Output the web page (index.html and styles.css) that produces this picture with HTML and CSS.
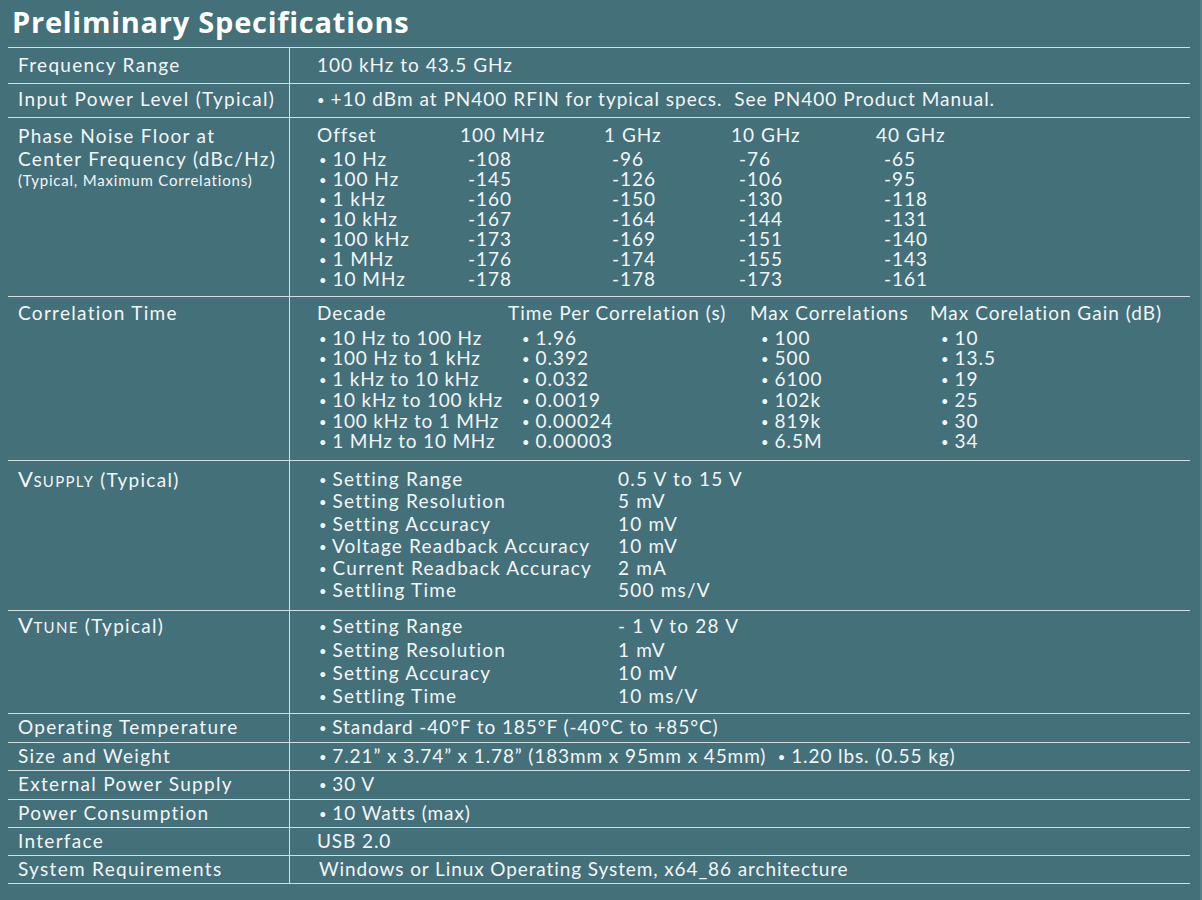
FILE: index.html
```html
<!DOCTYPE html>
<html>
<head>
<meta charset="utf-8">
<link rel="stylesheet" href="styles.css">
</head>
<body>
<div class="page">
  <h1 class="title">Preliminary Specifications</h1>
  <div class="specs">
    <div class="row r-freq">
      <div class="label">Frequency Range</div>
      <div class="value">100 kHz to 43.5 GHz</div>
    </div>
    <div class="row r-input">
      <div class="label">Input Power Level (Typical)</div>
      <div class="value"><span class="b">•</span> +10 dBm at PN400 RFIN for typical specs.&nbsp; See PN400 Product Manual.</div>
    </div>
    <div class="row r-phase">
      <div class="label">
        <div class="l23">Phase Noise Floor at</div>
        <div class="l23">Center Frequency (dBc/Hz)</div>
        <div class="small">(Typical, Maximum Correlations)</div>
      </div>
      <div class="value">
        <div class="phase-grid">
          <div class="hd">Offset</div><div class="hd">100 MHz</div><div class="hd">1 GHz</div><div class="hd">10 GHz</div><div class="hd">40 GHz</div>
          <div class="off"><span class="b">•</span> 10 Hz</div><div class="num">-108</div><div class="num">-96</div><div class="num">-76</div><div class="num">-65</div>
          <div class="off"><span class="b">•</span> 100 Hz</div><div class="num">-145</div><div class="num">-126</div><div class="num">-106</div><div class="num">-95</div>
          <div class="off"><span class="b">•</span> 1 kHz</div><div class="num">-160</div><div class="num">-150</div><div class="num">-130</div><div class="num">-118</div>
          <div class="off"><span class="b">•</span> 10 kHz</div><div class="num">-167</div><div class="num">-164</div><div class="num">-144</div><div class="num">-131</div>
          <div class="off"><span class="b">•</span> 100 kHz</div><div class="num">-173</div><div class="num">-169</div><div class="num">-151</div><div class="num">-140</div>
          <div class="off"><span class="b">•</span> 1 MHz</div><div class="num">-176</div><div class="num">-174</div><div class="num">-155</div><div class="num">-143</div>
          <div class="off"><span class="b">•</span> 10 MHz</div><div class="num">-178</div><div class="num">-178</div><div class="num">-173</div><div class="num">-161</div>
        </div>
      </div>
    </div>
    <div class="row r-corr">
      <div class="label">Correlation Time</div>
      <div class="value">
        <div class="corr-grid">
          <div class="hd">Decade</div><div class="hd">Time Per Correlation (s)</div><div class="hd">Max Correlations</div><div class="hd">Max Corelation Gain (dB)</div>
          <div class="c0"><span class="b">•</span> 10 Hz to 100 Hz</div><div class="c1"><span class="b">•</span> 1.96</div><div class="c2"><span class="b">•</span> 100</div><div class="c3"><span class="b">•</span> 10</div>
          <div class="c0"><span class="b">•</span> 100 Hz to 1 kHz</div><div class="c1"><span class="b">•</span> 0.392</div><div class="c2"><span class="b">•</span> 500</div><div class="c3"><span class="b">•</span> 13.5</div>
          <div class="c0"><span class="b">•</span> 1 kHz to 10 kHz</div><div class="c1"><span class="b">•</span> 0.032</div><div class="c2"><span class="b">•</span> 6100</div><div class="c3"><span class="b">•</span> 19</div>
          <div class="c0"><span class="b">•</span> 10 kHz to 100 kHz</div><div class="c1"><span class="b">•</span> 0.0019</div><div class="c2"><span class="b">•</span> 102k</div><div class="c3"><span class="b">•</span> 25</div>
          <div class="c0"><span class="b">•</span> 100 kHz to 1 MHz</div><div class="c1"><span class="b">•</span> 0.00024</div><div class="c2"><span class="b">•</span> 819k</div><div class="c3"><span class="b">•</span> 30</div>
          <div class="c0"><span class="b">•</span> 1 MHz to 10 MHz</div><div class="c1"><span class="b">•</span> 0.00003</div><div class="c2"><span class="b">•</span> 6.5M</div><div class="c3"><span class="b">•</span> 34</div>
        </div>
      </div>
    </div>
    <div class="row r-vsup">
      <div class="label"><span class="bigv">V</span><span class="sc">SUPPLY</span> (Typical)</div>
      <div class="value">
        <div class="kv-grid">
          <div><span class="b">•</span> Setting Range</div><div>0.5 V to 15 V</div>
          <div><span class="b">•</span> Setting Resolution</div><div>5 mV</div>
          <div><span class="b">•</span> Setting Accuracy</div><div>10 mV</div>
          <div><span class="b">•</span> Voltage Readback Accuracy</div><div>10 mV</div>
          <div><span class="b">•</span> Current Readback Accuracy</div><div>2 mA</div>
          <div><span class="b">•</span> Settling Time</div><div>500 ms/V</div>
        </div>
      </div>
    </div>
    <div class="row r-vtune">
      <div class="label"><span class="bigv">V</span><span class="sc">TUNE</span> (Typical)</div>
      <div class="value">
        <div class="kv-grid">
          <div><span class="b">•</span> Setting Range</div><div>- 1 V to 28 V</div>
          <div><span class="b">•</span> Setting Resolution</div><div>1 mV</div>
          <div><span class="b">•</span> Setting Accuracy</div><div>10 mV</div>
          <div><span class="b">•</span> Settling Time</div><div>10 ms/V</div>
        </div>
      </div>
    </div>
    <div class="row r-small tall">
      <div class="label">Operating Temperature</div>
      <div class="value narrow"><span class="b">•</span> Standard -40°F to 185°F (-40°C to +85°C)</div>
    </div>
    <div class="row r-small">
      <div class="label">Size and Weight</div>
      <div class="value narrow"><span class="b">•</span> 7.21” x 3.74” x 1.78” (183mm x 95mm x 45mm)&nbsp; <span class="b">•</span> 1.20 lbs. (0.55 kg)</div>
    </div>
    <div class="row r-small tall">
      <div class="label">External Power Supply</div>
      <div class="value narrow"><span class="b">•</span> 30 V</div>
    </div>
    <div class="row r-small">
      <div class="label">Power Consumption</div>
      <div class="value narrow"><span class="b">•</span> 10 Watts (max)</div>
    </div>
    <div class="row r-small">
      <div class="label">Interface</div>
      <div class="value narrow plain">USB 2.0</div>
    </div>
    <div class="row r-small">
      <div class="label">System Requirements</div>
      <div class="value narrow">Windows or Linux Operating System, x64_86 architecture</div>
    </div>
  </div>
</div>
</body>
</html>
```

FILE: styles.css
```css
html, body {
  margin: 0;
  padding: 0;
  background: #44707a;
}

.page {
  width: 1202px;
  height: 900px;
  box-sizing: border-box;
  padding: 0 10px 0 8px;
  border-right: 2px solid #56808a;
  color: #f3f6f6;
  font-family: "Lato", "Liberation Sans", sans-serif;
  font-size: 19px;
  letter-spacing: 1px;
}

.title {
  margin: 0;
  padding: 0 0 3px 4px;
  font-family: "Open Sans", "Lato", sans-serif;
  font-weight: 700;
  font-size: 29px;
  line-height: 44px;
  letter-spacing: 0.75px;
  color: #ffffff;
}

.specs {
  border-top: 1px solid #d3dedf;
}

.row {
  display: grid;
  grid-template-columns: 281px 1fr;
  border-bottom: 1px solid #d3dedf;
}

.label {
  padding-left: 10px;
  line-height: 22px;
  letter-spacing: 1.3px;
}

.value {
  border-left: 1px solid #d3dedf;
  padding-left: 27px;
  line-height: 22px;
}

.b {
  font-size: 13px;
  line-height: 0;
  letter-spacing: 0;
  vertical-align: 1px;
}

.r-freq .label, .r-freq .value { padding-top: 6px; padding-bottom: 7px; }
.r-input .label, .r-input .value { padding-top: 4px; padding-bottom: 7px; }

.r-phase .label, .r-phase .value { padding-top: 6px; padding-bottom: 7px; }
.l23 { line-height: 23px; }
.small { font-size: 15px; line-height: 20px; letter-spacing: 0.8px; }

.phase-grid {
  display: grid;
  grid-template-columns: 143px 144px 127px 145px auto;
  grid-template-rows: 25px;
  grid-auto-rows: 20px;
  line-height: 20px;
}
.phase-grid .hd { line-height: 22px; }
.phase-grid .off { padding-left: 2px; }
.phase-grid .num { padding-left: 8px; }

.r-corr .label, .r-corr .value { padding-top: 5px; padding-bottom: 8px; }
.corr-grid {
  display: grid;
  grid-template-columns: 191px 242px 180px auto;
  grid-template-rows: 25.5px;
  grid-auto-rows: 20.8px;
  line-height: 20.8px;
}
.corr-grid .hd { line-height: 22px; white-space: nowrap; }
.corr-grid .c0 { padding-left: 2px; letter-spacing: 0.8px; }
.corr-grid .c1 { padding-left: 14px; }
.corr-grid .c2 { padding-left: 11px; }
.corr-grid .c3 { padding-left: 11px; }

.r-vsup .label, .r-vsup .value { padding-top: 7px; padding-bottom: 9px; }
.r-vsup .kv-grid { grid-auto-rows: 22.2px; line-height: 22.2px; }
.r-vtune .label, .r-vtune .value { padding-top: 3px; padding-bottom: 5px; }
.r-vtune .kv-grid { grid-auto-rows: 23.3px; line-height: 23.3px; }

.kv-grid {
  display: grid;
  grid-template-columns: 299px auto;
  padding-left: 2px;
  letter-spacing: 1.2px;
}

.bigv { font-size: 22px; letter-spacing: 0.5px; }
.sc { font-size: 15px; letter-spacing: 1.3px; }

.r-small .label, .r-small .value { padding-top: 2px; padding-bottom: 3px; }
.r-small.tall .label, .r-small.tall .value { padding-bottom: 4px; }
.narrow { letter-spacing: 0.9px; padding-left: 29px; }
.narrow.plain { padding-left: 27px; }
```
